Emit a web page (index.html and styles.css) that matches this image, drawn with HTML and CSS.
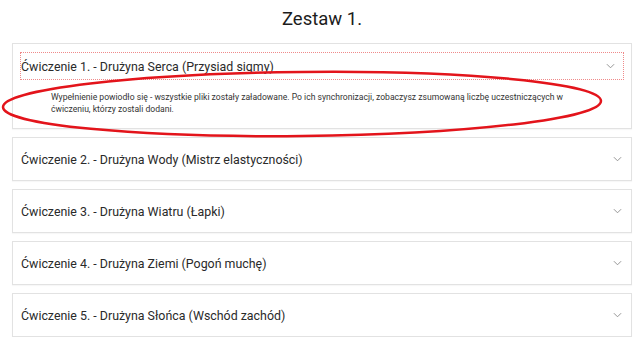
FILE: index.html
```html
<!DOCTYPE html>
<html lang="pl">

<head>
    <meta charset="UTF-8">
    <meta name="viewport" content="width=device-width, initial-scale=1.0">
    <title>Zestaw 1.</title>
    <link rel="stylesheet" href="styles.css">
</head>

<body>
    <div class="page">
        <h1 class="set-title">Zestaw 1.</h1>

        <div class="exercises">
            <div class="exercise open">
                <div class="exercise-header focused">
                    <span class="exercise-title">Ćwiczenie 1. - Drużyna Serca (Przysiad sigmy)</span>
                    <svg class="chevron" viewBox="0 0 10 6"><path d="M1 1 L5 5 L9 1" /></svg>
                </div>
                <div class="exercise-body">
                    Wypełnienie powiodło się - wszystkie pliki zostały załadowane. Po ich synchronizacji, zobaczysz zsumowaną liczbę uczestniczących w ćwiczeniu, którzy zostali dodani.
                </div>
            </div>

            <div class="exercise">
                <div class="exercise-header">
                    <span class="exercise-title">Ćwiczenie 2. - Drużyna Wody (Mistrz elastyczności)</span>
                    <svg class="chevron" viewBox="0 0 10 6"><path d="M1 1 L5 5 L9 1" /></svg>
                </div>
            </div>

            <div class="exercise">
                <div class="exercise-header">
                    <span class="exercise-title">Ćwiczenie 3. - Drużyna Wiatru (Łapki)</span>
                    <svg class="chevron" viewBox="0 0 10 6"><path d="M1 1 L5 5 L9 1" /></svg>
                </div>
            </div>

            <div class="exercise">
                <div class="exercise-header">
                    <span class="exercise-title">Ćwiczenie 4. - Drużyna Ziemi (Pogoń muchę)</span>
                    <svg class="chevron" viewBox="0 0 10 6"><path d="M1 1 L5 5 L9 1" /></svg>
                </div>
            </div>

            <div class="exercise">
                <div class="exercise-header">
                    <span class="exercise-title">Ćwiczenie 5. - Drużyna Słońca (Wschód zachód)</span>
                    <svg class="chevron" viewBox="0 0 10 6"><path d="M1 1 L5 5 L9 1" /></svg>
                </div>
            </div>
        </div>

        <!-- red annotation drawn over the first card -->
        <svg class="annotation" viewBox="0 0 639 343">
            <ellipse cx="302" cy="104" rx="299" ry="32" transform="rotate(-0.6 302 104)" />
        </svg>
    </div>
</body>

</html>
```

FILE: styles.css
```css
body {
    margin: 0;
    font-family: Roboto, "Liberation Sans", sans-serif;
    color: #222;
    background: #fff;
}

.page {
    position: relative;
    padding: 0 7px 0 12px;
}

.set-title {
    margin: 0;
    padding-top: 7px;
    height: 36px;
    text-align: center;
    font-size: 18.5px;
    font-weight: 400;
    line-height: 24px;
    color: #1c1c1c;
}

.exercises {
    display: flex;
    flex-direction: column;
    gap: 8px;
}

.exercise {
    border: 1px solid #e2e2e2;
    background: #fff;
    box-shadow: 0 1px 1px rgba(0, 0, 0, 0.03);
}

.exercise-header {
    display: flex;
    align-items: center;
    justify-content: space-between;
    height: 42px;
    padding: 0 9px 0 8px;
}

.exercise.open {
    padding: 8px 7px 13px;
}

.exercise.open .exercise-header {
    height: 26px;
    padding: 0 8px 0 0;
    border: 1px dotted #ef8a8a;
}

.exercise-title {
    font-size: 12.4px;
    color: #2a2a2a;
}

.chevron {
    width: 9px;
    height: 6px;
    fill: none;
    stroke: #8a8a8a;
    stroke-width: 1;
}

.exercise-body {
    padding: 12px 40px 0 31px;
    font-size: 8.6px;
    line-height: 11.5px;
    color: #333;
}

.annotation {
    position: absolute;
    left: 0;
    top: 0;
    width: 639px;
    height: 343px;
    pointer-events: none;
}

.annotation ellipse {
    fill: none;
    stroke: #e3141b;
    stroke-width: 2.5;
}
```
